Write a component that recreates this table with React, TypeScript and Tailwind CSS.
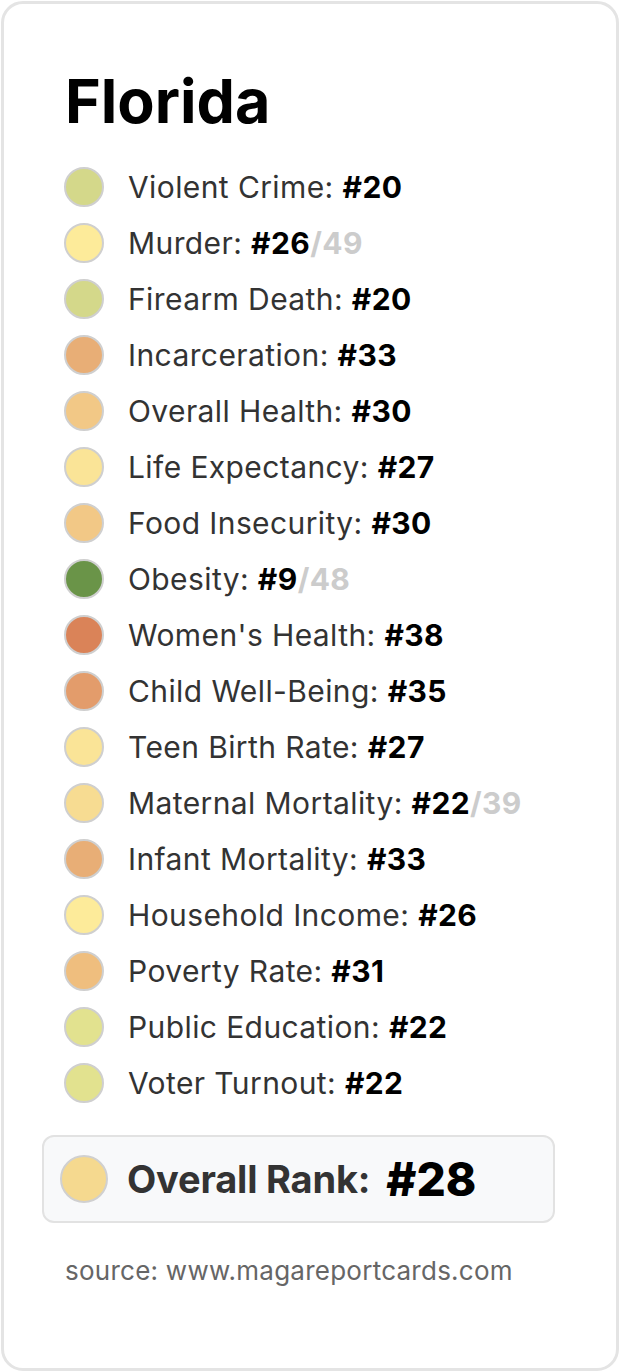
import React from "react";

type Item = { label: string; rank: number; of?: number; color: string };

const items: Item[] = [
  { label: "Violent Crime", rank: 20, color: "#d4d88a" },
  { label: "Murder", rank: 26, of: 49, color: "#fdeb9a" },
  { label: "Firearm Death", rank: 20, color: "#d4d88a" },
  { label: "Incarceration", rank: 33, color: "#e8ae76" },
  { label: "Overall Health", rank: 30, color: "#f2c886" },
  { label: "Life Expectancy", rank: 27, color: "#fae497" },
  { label: "Food Insecurity", rank: 30, color: "#f2c886" },
  { label: "Obesity", rank: 9, of: 48, color: "#6a9448" },
  { label: "Women's Health", rank: 38, color: "#da8358" },
  { label: "Child Well-Being", rank: 35, color: "#e39c6b" },
  { label: "Teen Birth Rate", rank: 27, color: "#fae497" },
  { label: "Maternal Mortality", rank: 22, of: 39, color: "#f7dc92" },
  { label: "Infant Mortality", rank: 33, color: "#e8ae76" },
  { label: "Household Income", rank: 26, color: "#fdeb9a" },
  { label: "Poverty Rate", rank: 31, color: "#efbe7e" },
  { label: "Public Education", rank: 22, color: "#e2e28f" },
  { label: "Voter Turnout", rank: 22, color: "#e2e28f" },
];

export default function App() {
  return (
    <div
      className="w-[620px] h-[1372px] bg-white p-[1px]"
      style={{ fontFamily: "Inter, 'Liberation Sans', sans-serif" }}
    >
      <div className="h-full rounded-[22px] border-[3px] border-[#e4e4e4] bg-white pl-[38px] pt-[67px]">
        <h1 className="pl-[23px] text-[61px] font-bold leading-[60px] text-black">
          Florida
        </h1>
        <ul className="mt-[28px] pl-[22px]">
          {items.map((it) => (
            <li key={it.label} className="flex h-[56px] items-center">
              <span
                className="h-[40px] w-[40px] shrink-0 rounded-full border-2 border-[#cfcfcf]"
                style={{ backgroundColor: it.color }}
              />
              <span className="ml-[24px] text-[30px] leading-none tracking-[0.4px] text-[#333333]">
                {it.label}: <b className="font-bold text-black">#{it.rank}</b>
                {it.of !== undefined && (
                  <b className="font-bold text-[#cccccc]">/{it.of}</b>
                )}
              </span>
            </li>
          ))}
        </ul>
        <div className="mt-[24px] flex h-[88px] w-[513px] items-center rounded-[12px] border-2 border-[#e2e2e2] bg-[#f8f9fa] pl-[16px]">
          <span
            className="h-[48px] w-[48px] shrink-0 rounded-full border-2 border-[#d0d0d0]"
            style={{ backgroundColor: "#f5d98f" }}
          />
          <span className="ml-[19px] text-[38px] font-bold leading-none tracking-[-0.2px] text-[#333333]">
            Overall Rank:
          </span>
          <span className="ml-[16px] text-[46px] font-extrabold leading-none text-black">
            #28
          </span>
        </div>
        <p className="mt-[35px] pl-[23px] text-[26px] leading-none tracking-[0.25px] text-[#666666]">
          source: www.magareportcards.com
        </p>
      </div>
    </div>
  );
}
